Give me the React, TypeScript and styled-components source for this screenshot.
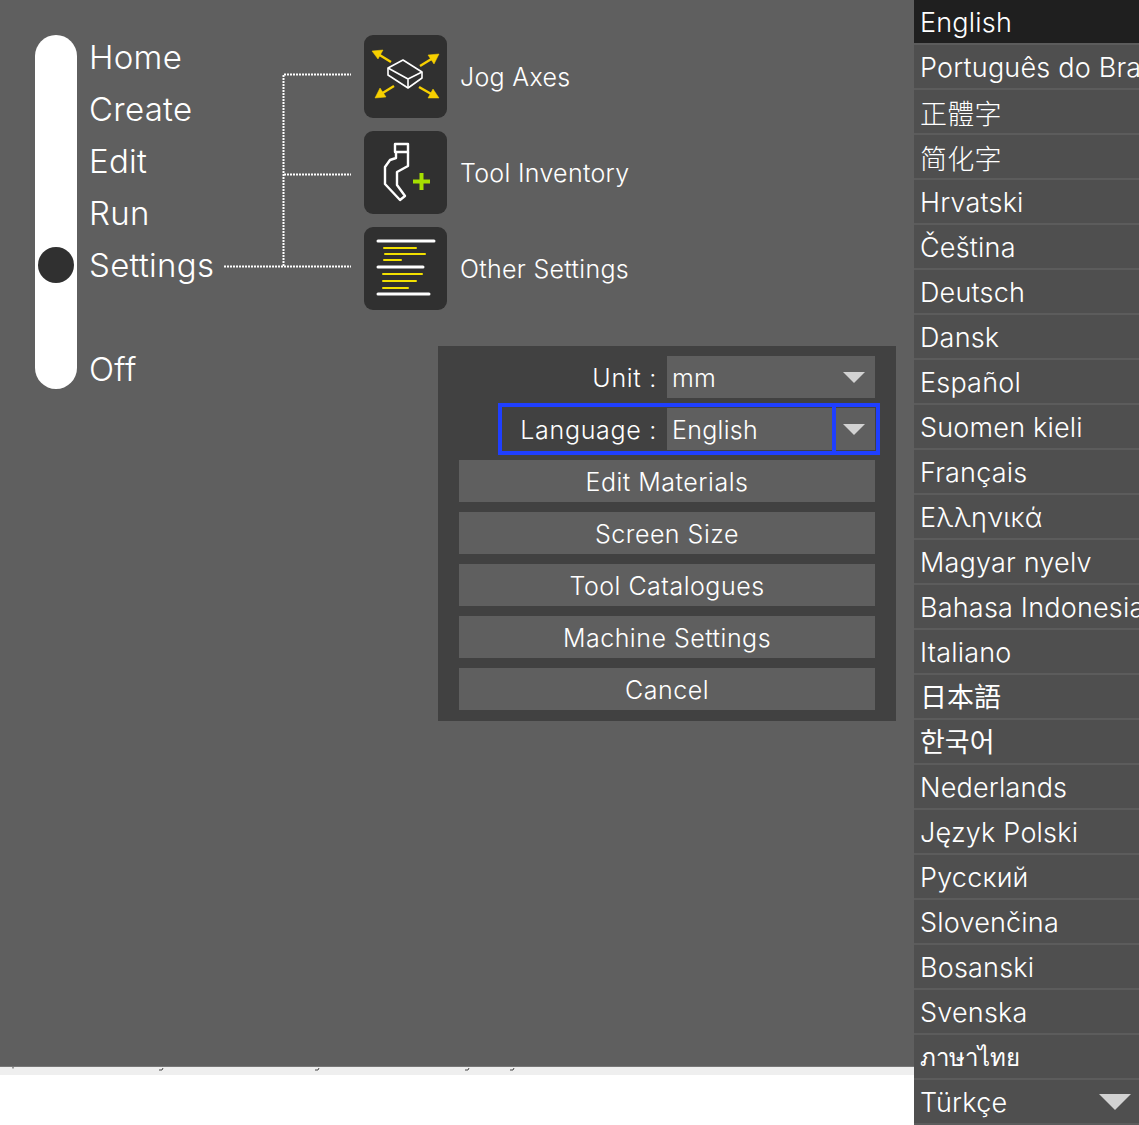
import styled, { createGlobalStyle } from "styled-components";

const GlobalStyle = createGlobalStyle`
  html, body {
    margin: 0;
    padding: 0;
    background: #ffffff;
    overflow: hidden;
  }
  body {
    font-family: "Inter", "Noto Sans", "Noto Sans CJK SC", sans-serif;
    color: #ffffff;
  }
`;

const Page = styled.div`
  display: flex;
  width: 1139px;
  height: 1125px;
  overflow: hidden;
`;

const Main = styled.div`
  display: flex;
  flex-direction: column;
  width: 914px;
`;

const Screen = styled.div`
  height: 1067px;
  background: #5f5f5f;
  border-bottom: 1px solid #777777;
  box-sizing: border-box;
  padding: 35px 0 0 35px;
`;

const Strip = styled.div`
  height: 8px;
  background: #efefef;
  overflow: hidden;
`;

const TopRow = styled.div`
  display: flex;
  align-items: flex-start;
`;

const Track = styled.div`
  width: 42px;
  height: 354px;
  box-sizing: border-box;
  padding-top: 212px;
  border-radius: 21px;
  background: #ffffff;
  display: flex;
  justify-content: center;
`;

const Knob = styled.div`
  width: 36px;
  height: 36px;
  border-radius: 50%;
  background: #303030;
`;

const MenuList = styled.div`
  width: 135px;
  margin: -4px 0 0 12px;
  display: flex;
  flex-direction: column;
`;

const MenuItem = styled.div<{ $spaced?: boolean }>`
  height: 52px;
  line-height: 52px;
  font-size: 33px;
  font-weight: 300;
  letter-spacing: 0.3px;
  margin-top: ${(p) => (p.$spaced ? "52px" : "0")};
`;

const Connector = styled.svg`
  display: block;
  flex: none;
`;

const Right = styled.div`
  display: flex;
  flex-direction: column;
  margin-left: 12px;
`;

const ToolList = styled.div`
  display: flex;
  flex-direction: column;
  gap: 13px;
`;

const Tool = styled.div`
  display: flex;
  align-items: center;
  gap: 13px;
`;

const ToolIcon = styled.div`
  width: 83px;
  height: 83px;
  border-radius: 9px;
  background: #303030;
  flex: none;
  svg {
    display: block;
  }
`;

const ToolLabel = styled.span`
  font-size: 25px;
  font-weight: 300;
  letter-spacing: 0.3px;
`;

const Dialog = styled.div`
  width: 458px;
  box-sizing: border-box;
  margin: 36px 0 0 74px;
  padding: 10px 21px 11px;
  background: #414141;
  display: flex;
  flex-direction: column;
  gap: 10px;
`;

const FieldRow = styled.div`
  position: relative;
  display: flex;
  justify-content: flex-end;
  align-items: center;
  height: 42px;
`;

const FieldLabel = styled.span`
  font-size: 25px;
  font-weight: 300;
  letter-spacing: 0.7px;
  margin: 2px 10px 0 0;
`;

const Select = styled.div`
  width: 208px;
  height: 42px;
  box-sizing: border-box;
  padding: 0 10px 0 5px;
  background: #5f5f5f;
  display: flex;
  align-items: center;
  justify-content: space-between;
`;

const SelectValue = styled.span`
  font-size: 25px;
  font-weight: 300;
  letter-spacing: 0.3px;
  margin-top: 2px;
`;

const Caret = styled.span<{ $big?: boolean }>`
  width: 0;
  height: 0;
  border-left: ${(p) => (p.$big ? "16px" : "11px")} solid transparent;
  border-right: ${(p) => (p.$big ? "16px" : "11px")} solid transparent;
  border-top: ${(p) => (p.$big ? "16px" : "11px")} solid #d2d2d2;
`;

const Highlight = styled.div`
  position: absolute;
  top: -5px;
  right: -5px;
  width: 382px;
  height: 52px;
  box-sizing: border-box;
  border: 4px solid #1f3fff;
  &::after {
    content: "";
    position: absolute;
    top: 0;
    bottom: 0;
    right: 40px;
    width: 4px;
    background: #1f3fff;
  }
`;

const DialogButton = styled.div`
  height: 42px;
  line-height: 44px;
  background: #5f5f5f;
  text-align: center;
  font-size: 25px;
  font-weight: 300;
  letter-spacing: 0.5px;
`;

const LanguageList = styled.div`
  width: 225px;
  height: 1125px;
  overflow: hidden;
  display: flex;
  flex-direction: column;
`;

const LanguageRow = styled.div<{ $active?: boolean; $script?: string }>`
  flex: none;
  height: 45px;
  box-sizing: border-box;
  padding: ${(p) => (p.$script === "cjk" ? "0 8px 2px 6px" : "1px 8px 0 6px")};
  display: flex;
  align-items: center;
  justify-content: space-between;
  white-space: nowrap;
  background: ${(p) => (p.$active ? "#1f1f1f" : "#4f4f4f")};
  border-bottom: 2px solid #5c5c5c;
  font-size: ${(p) => (p.$script === "thai" ? "24px" : "27px")};
  font-weight: ${(p) => (p.$script === "cjk" ? 400 : 300)};
  letter-spacing: ${(p) => (p.$script ? "0" : "0.2px")};
`;

const languages: { name: string; script?: string }[] = [
  { name: "English" },
  { name: "Português do Brasil" },
  { name: "正體字" },
  { name: "简化字" },
  { name: "Hrvatski" },
  { name: "Čeština" },
  { name: "Deutsch" },
  { name: "Dansk" },
  { name: "Español" },
  { name: "Suomen kieli" },
  { name: "Français" },
  { name: "Ελληνικά" },
  { name: "Magyar nyelv" },
  { name: "Bahasa Indonesia" },
  { name: "Italiano" },
  { name: "日本語", script: "cjk" },
  { name: "한국어", script: "cjk" },
  { name: "Nederlands" },
  { name: "Język Polski" },
  { name: "Русский" },
  { name: "Slovenčina" },
  { name: "Bosanski" },
  { name: "Svenska" },
  { name: "ภาษาไทย", script: "thai" },
  { name: "Türkçe" },
];

const buttons = [
  "Edit Materials",
  "Screen Size",
  "Tool Catalogues",
  "Machine Settings",
  "Cancel",
];

function JogIcon() {
  const yellow = "#f7d000";
  return (
    <svg width="83" height="83" viewBox="0 0 83 83">
      <g fill={yellow} stroke={yellow}>
        <path d="M27 27 L14 19" strokeWidth="2.5" fill="none" />
        <path d="M8 16 L19 15 L14 24 Z" strokeWidth="0.5" />
        <path d="M56 31 L69 23" strokeWidth="2.5" fill="none" />
        <path d="M75 19 L70 29 L64 20 Z" strokeWidth="0.5" />
        <path d="M30 51 L17 59" strokeWidth="2.5" fill="none" />
        <path d="M11 63 L16 53 L22 62 Z" strokeWidth="0.5" />
        <path d="M55 52 L69 60" strokeWidth="2.5" fill="none" />
        <path d="M75 63 L64 63 L69 54 Z" strokeWidth="0.5" />
      </g>
      <g fill="none" stroke="#ffffff" strokeWidth="1.6" strokeLinejoin="round">
        <path d="M39 25 L58 37 L58 43 L44 53 L24 40 L24 33 Z" />
        <path d="M24 33 L44 44 L58 37 M44 44 L44 53" />
      </g>
    </svg>
  );
}

function ToolAddIcon() {
  return (
    <svg width="83" height="83" viewBox="0 0 83 83">
      <g fill="none" stroke="#ffffff" strokeWidth="2.4" strokeLinejoin="round">
        <rect x="31" y="13" width="13" height="8" />
        <path d="M32 21 L32 27 L26 29 L21 36 L21 53 L36 69 L41 65 L33 54 L33 41 L44 35 L44 21" />
      </g>
      <path d="M57.5 42 V59 M49 50.5 H66" stroke="#a6e000" strokeWidth="4" fill="none" />
    </svg>
  );
}

function SettingsIcon() {
  const lines: [number, number, number, boolean][] = [
    [14, 70, 14, true],
    [20, 52, 21, false],
    [21, 61, 27, false],
    [20, 37, 33, false],
    [14, 59, 40, true],
    [19, 58, 47, false],
    [19, 52, 54, false],
    [19, 44, 61, false],
    [14, 65, 67, true],
  ];
  return (
    <svg width="83" height="83" viewBox="0 0 83 83">
      {lines.map(([x1, x2, y, white]) => (
        <line
          key={y}
          x1={x1}
          x2={x2}
          y1={y}
          y2={y}
          stroke={white ? "#ffffff" : "#f2e000"}
          strokeWidth={white ? 3 : 2}
          strokeLinecap="round"
        />
      ))}
    </svg>
  );
}

function Ticks() {
  return (
    <svg width="530" height="5" viewBox="0 0 530 5" style={{ display: "block" }}>
      <g fill="none" stroke="#444444" strokeWidth="1">
        <path d="M13 0 V1.5" />
        <path d="M159 3 H162 L163 1" />
        <path d="M315 3 H318 L319 1" />
        <path d="M465 3 H468 L469 1" />
        <path d="M510 3 H513 L514 1" />
      </g>
    </svg>
  );
}

export default function App() {
  return (
    <Page>
      <GlobalStyle />
      <Main>
        <Screen>
          <TopRow>
            <Track>
              <Knob />
            </Track>
            <MenuList>
              <MenuItem>Home</MenuItem>
              <MenuItem>Create</MenuItem>
              <MenuItem>Edit</MenuItem>
              <MenuItem>Run</MenuItem>
              <MenuItem>Settings</MenuItem>
              <MenuItem $spaced>Off</MenuItem>
            </MenuList>
            <Connector width="128" height="240" viewBox="0 0 128 240">
              <path
                d="M0 231.5 H127 M59.5 231 V39 M60 39.5 H127 M60 139.5 H127"
                fill="none"
                stroke="#ffffff"
                strokeWidth="2"
                strokeDasharray="2 1"
              />
            </Connector>
            <Right>
              <ToolList>
                <Tool>
                  <ToolIcon>
                    <JogIcon />
                  </ToolIcon>
                  <ToolLabel>Jog Axes</ToolLabel>
                </Tool>
                <Tool>
                  <ToolIcon>
                    <ToolAddIcon />
                  </ToolIcon>
                  <ToolLabel>Tool Inventory</ToolLabel>
                </Tool>
                <Tool>
                  <ToolIcon>
                    <SettingsIcon />
                  </ToolIcon>
                  <ToolLabel>Other Settings</ToolLabel>
                </Tool>
              </ToolList>
              <Dialog>
                <FieldRow>
                  <FieldLabel>Unit :</FieldLabel>
                  <Select>
                    <SelectValue>mm</SelectValue>
                    <Caret />
                  </Select>
                </FieldRow>
                <FieldRow>
                  <FieldLabel>Language :</FieldLabel>
                  <Select>
                    <SelectValue>English</SelectValue>
                    <Caret />
                  </Select>
                  <Highlight />
                </FieldRow>
                {buttons.map((label) => (
                  <DialogButton key={label}>{label}</DialogButton>
                ))}
              </Dialog>
            </Right>
          </TopRow>
        </Screen>
        <Strip>
          <Ticks />
        </Strip>
      </Main>
      <LanguageList>
        {languages.map(({ name, script }, i) => (
          <LanguageRow key={name} $active={i === 0} $script={script}>
            {name}
            {name === "Türkçe" && <Caret $big />}
          </LanguageRow>
        ))}
      </LanguageList>
    </Page>
  );
}
